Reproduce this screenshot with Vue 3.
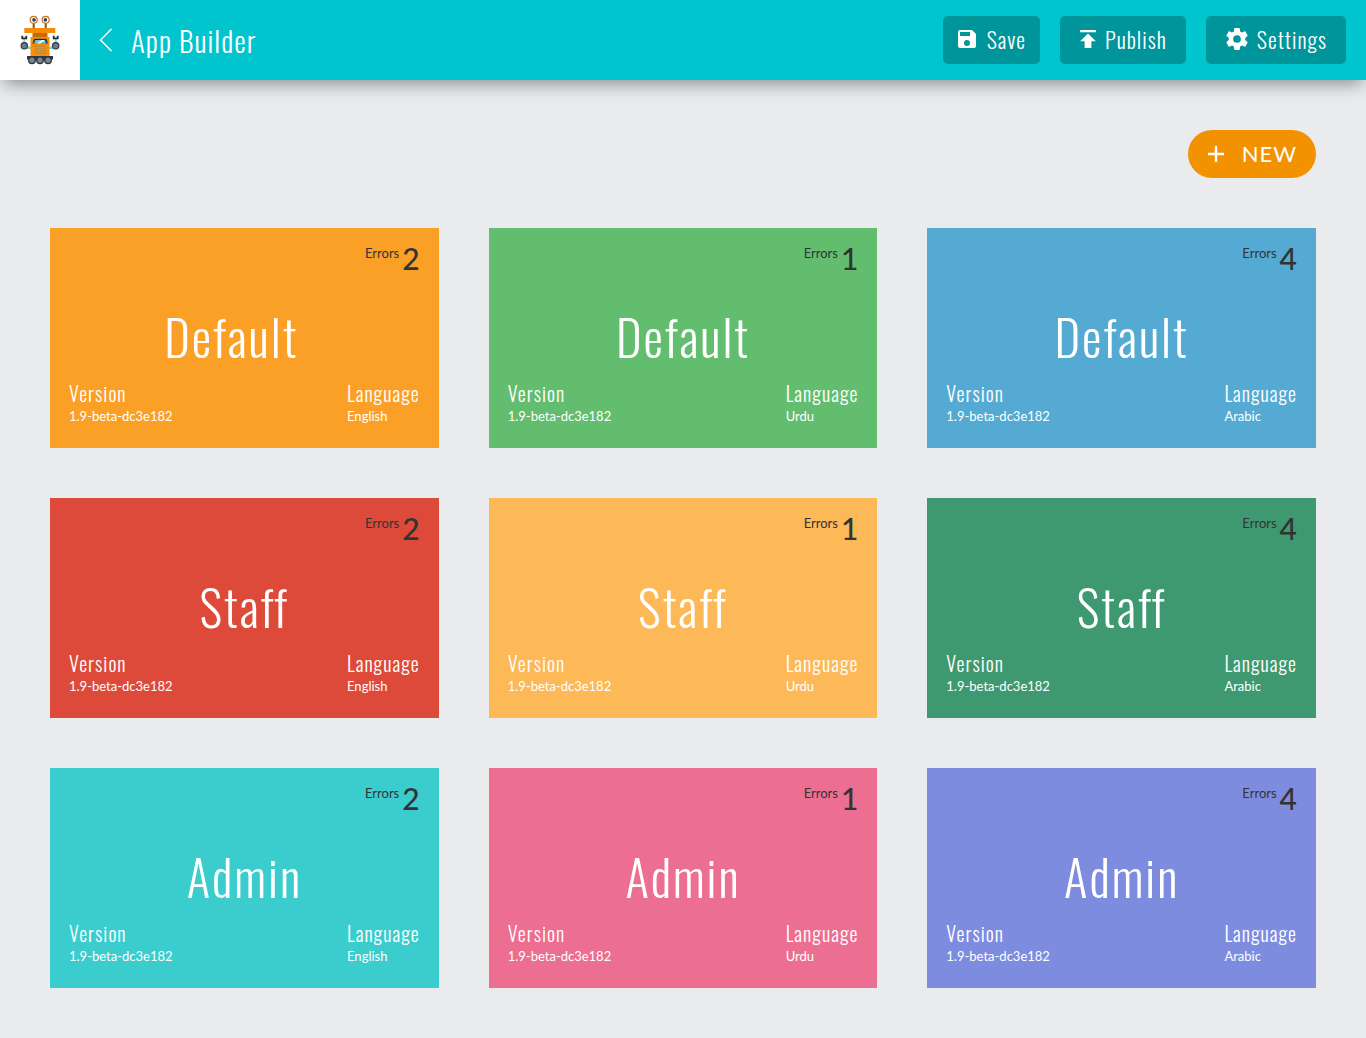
<script setup>
const languages = [
  { name: 'English', errors: 2 },
  { name: 'Urdu', errors: 1 },
  { name: 'Arabic', errors: 4 }
]
const roles = [
  { name: 'Default', tones: ['orange', 'green', 'blue'] },
  { name: 'Staff', tones: ['red', 'amber', 'forest'] },
  { name: 'Admin', tones: ['teal', 'pink', 'violet'] }
]
const version = '1.9-beta-dc3e182'
const cards = roles.flatMap(role =>
  languages.map((language, i) => ({
    id: `${role.name}-${language.name}`,
    title: role.name,
    tone: role.tones[i],
    language: language.name,
    errors: language.errors
  }))
)
</script>

<template>
  <header class="bar">
    <a class="logo" href="#" aria-label="Home">
      <svg viewBox="20 14 40 52" width="40" height="52" aria-hidden="true">
        <path d="M33.7 22v6M45.7 22v6" stroke="#8a4f1c" stroke-width="2" />
        <g fill="#fff" stroke="#c8751c" stroke-width="1.2">
          <circle cx="33.7" cy="19.8" r="3.5" />
          <circle cx="45.7" cy="19.8" r="3.5" />
        </g>
        <g fill="#34404c">
          <circle cx="34" cy="19.9" r="1.8" />
          <circle cx="45.4" cy="19.9" r="1.8" />
        </g>
        <path d="M32.500 33h15v4h-15z" fill="#c56a00" />
        <path d="M24.3 28h31v5h-31z" fill="#f78c00" />
        <path d="M27 46.500h4v2.500h-4zM49 46.500h4v2.500h-4z" fill="#7fdbe0" />
        <path d="M24.300 39v4M55.700 39v4" stroke="#7fdbe0" stroke-width="2" />
        <path d="M30.500 37h19v19h-19z" fill="#f98f05" />
        <path d="M34 38.800h12.500l1.300 4.700H32.500z" fill="#24303c" />
        <path d="M35.500 40h9.500l1 3.500H33.800z" fill="#6cc7ee" />
        <path d="M37 43.500l5-3.500h2.500l-4 3.500z" fill="#fff" />
        <path d="M35 45.500h10.500v8.500H35z" fill="#bd8230" />
        <path d="M37 45.500v8.500M39.100 45.500v8.500M41.200 45.500v8.500M43.300 45.500v8.500M35 47.500h10.500M35 49.700h10.500M35 51.900h10.500" stroke="#e0a347" stroke-width=".6" />
        <g fill="none" stroke="#202c36" stroke-width="1.800">
          <path d="M22.300 35.800v2.600h4v-2.600M53.700 35.800v2.600h4v-2.600" />
        </g>
        <g fill="#6e7b86" stroke="#2b3742" stroke-width="1.100">
          <circle cx="24.300" cy="45.800" r="3.200" />
          <circle cx="55.700" cy="45.800" r="3.200" />
        </g>
        <path d="M27 56h26v2.500q0 1-1.500 1.500h-23q-1.500-.5-1.500-1.500z" fill="#2b3742" />
        <g fill="#7b858c" stroke="#2b3742" stroke-width="1.300">
          <circle cx="32" cy="60.200" r="3.300" />
          <circle cx="40" cy="60.200" r="3.300" />
          <circle cx="48" cy="60.200" r="3.300" />
        </g>
      </svg>
    </a>
    <a class="back" href="#" aria-label="Back">
      <svg viewBox="0 0 14 24" width="14" height="24" aria-hidden="true">
        <path d="M12.500 1L1.500 12l11 11" fill="none" stroke="#fff" stroke-width="1.500" />
      </svg>
    </a>
    <h1 class="heading">App Builder</h1>
    <nav class="actions" aria-label="App actions">
      <button class="action action--compact" type="button">
        <svg viewBox="3 3 18 18" width="18" height="18" aria-hidden="true">
          <path fill="#fff" d="M17 3H5a2 2 0 0 0-2 2v14a2 2 0 0 0 2 2h14c1.100 0 2-.9 2-2V7l-4-4zm-5 16a3 3 0 1 1 0-6 3 3 0 0 1 0 6zm3-10H5V5h10v4z" />
        </svg>
        Save
      </button>
      <button class="action" type="button">
        <svg viewBox="5 4 14 16" width="16" height="18" aria-hidden="true">
          <path fill="#fff" d="M5 4v2h14V4H5zm0 10h4v6h6v-6h4l-7-7-7 7z" />
        </svg>
        Publish
      </button>
      <button class="action" type="button">
        <svg viewBox="2 2 20 20" width="22" height="22" aria-hidden="true">
          <path fill="#fff" d="M19.430 12.980c.04-.32.07-.64.07-.98s-.03-.66-.07-.98l2.110-1.650c.19-.15.24-.42.12-.64l-2-3.460c-.12-.22-.39-.3-.61-.22l-2.490 1c-.52-.4-1.080-.73-1.690-.98l-.38-2.650C14.460 2.180 14.250 2 14 2h-4c-.25 0-.46.18-.49.42l-.38 2.650c-.61.25-1.170.59-1.690.98l-2.490-1c-.23-.09-.49 0-.61.22l-2 3.460c-.13.22-.07.49.12.64l2.110 1.650c-.04.32-.07.65-.07.98s.03.66.07.98l-2.110 1.650c-.19.15-.24.42-.12.64l2 3.460c.12.22.39.3.61.22l2.490-1c.52.4 1.080.73 1.690.98l.38 2.650c.03.24.24.42.49.42h4c.25 0 .46-.18.49-.42l.38-2.650c.61-.25 1.170-.59 1.690-.98l2.490 1c.23.09.49 0 .61-.22l2-3.460c.12-.22.07-.49-.12-.64l-2.110-1.650zM12 15.500a3.500 3.500 0 1 1 0-7 3.500 3.500 0 0 1 0 7z" />
        </svg>
        Settings
      </button>
    </nav>
  </header>

  <main class="content">
    <button class="new" type="button">
      <svg viewBox="0 0 16 16" width="16" height="16" aria-hidden="true">
        <path d="M8 0v16M0 8h16" stroke="#fff" stroke-width="2.300" />
      </svg>
      NEW
    </button>

    <section class="grid" aria-label="Apps">
      <article v-for="card in cards" :key="card.id" class="card" :class="`card--${card.tone}`">
        <p class="errors">Errors <span class="count">{{ card.errors }}</span></p>
        <h2 class="title">{{ card.title }}</h2>
        <dl class="details">
          <div>
            <dt>Version</dt>
            <dd>{{ version }}</dd>
          </div>
          <div>
            <dt>Language</dt>
            <dd>{{ card.language }}</dd>
          </div>
        </dl>
      </article>
    </section>
  </main>
</template>

<style>
body {
  margin: 0;
  background: #eaebed;
}
</style>

<style scoped>
.bar {
  position: relative;
  display: flex;
  align-items: center;
  height: 80px;
  padding-right: 20px;
  background: #00c5cf;
  box-shadow: 0 8px 16px -4px rgba(0, 0, 0, 0.4);
  color: #fff;
  font-family: Oswald, "Roboto Condensed", sans-serif;
  font-weight: 300;
}
.logo {
  display: flex;
  align-items: center;
  justify-content: center;
  width: 80px;
  height: 80px;
  background: #fff;
}
.back {
  display: flex;
  margin-left: 19px;
}
.heading {
  margin: 0 auto 0 18px;
  font-size: 29px;
  font-weight: 300;
  line-height: 40px;
  letter-spacing: 1px;
}
.actions {
  display: flex;
  gap: 20px;
}
.action {
  display: flex;
  align-items: center;
  gap: 9px;
  height: 48px;
  padding: 0 19px 2px 20px;
  border: 0;
  border-radius: 5px;
  background: #00949b;
  color: #fff;
  font: inherit;
  font-size: 22px;
  letter-spacing: 1px;
  cursor: pointer;
}
.action--compact {
  gap: 11px;
  padding: 0 14px 2px 15px;
}
.content {
  display: flex;
  flex-direction: column;
  gap: 50px;
  padding: 50px;
  font-family: Lato, sans-serif;
}
.new {
  display: flex;
  align-items: center;
  align-self: flex-end;
  gap: 18px;
  height: 48px;
  padding: 0 19px 1px 20px;
  border: 0;
  border-radius: 24px;
  background: #f39200;
  color: #fff;
  font: inherit;
  font-size: 22px;
  letter-spacing: 1px;
  cursor: pointer;
}
.grid {
  display: grid;
  grid-template-columns: repeat(3, 1fr);
  gap: 50px;
}
.card {
  display: flex;
  flex-direction: column;
  min-height: 220px;
  box-sizing: border-box;
  padding: 11px 19px 22px;
  color: #fff;
}
.errors {
  display: flex;
  align-items: flex-start;
  justify-content: flex-end;
  gap: 3px;
  margin: 0;
  color: #333;
  font-size: 13px;
  line-height: 28px;
}
.count {
  font-size: 30px;
  font-weight: 500;
  line-height: 38px;
}
.title {
  margin: auto auto 0;
  font-family: Oswald, "Roboto Condensed", sans-serif;
  font-size: 49px;
  font-weight: 300;
  line-height: 88px;
  letter-spacing: 2px;
}
.card--orange .title {
  padding-right: 26px;
}
.details {
  display: flex;
  justify-content: space-between;
  margin: 0;
}
.details dt {
  font-family: Oswald, "Roboto Condensed", sans-serif;
  font-size: 20px;
  font-weight: 300;
  line-height: 26px;
  letter-spacing: 1px;
}
.details dd {
  margin: 0;
  font-size: 13px;
  line-height: 20px;
}
.card--orange { background: #fba026; }
.card--green { background: #63bd6f; }
.card--blue { background: #54aad3; }
.card--red { background: #de4a39; }
.card--amber { background: #fdb858; }
.card--forest { background: #3f9970; }
.card--teal { background: #3bcccd; }
.card--pink { background: #ec6e91; }
.card--violet { background: #7e8cdf; }
</style>
